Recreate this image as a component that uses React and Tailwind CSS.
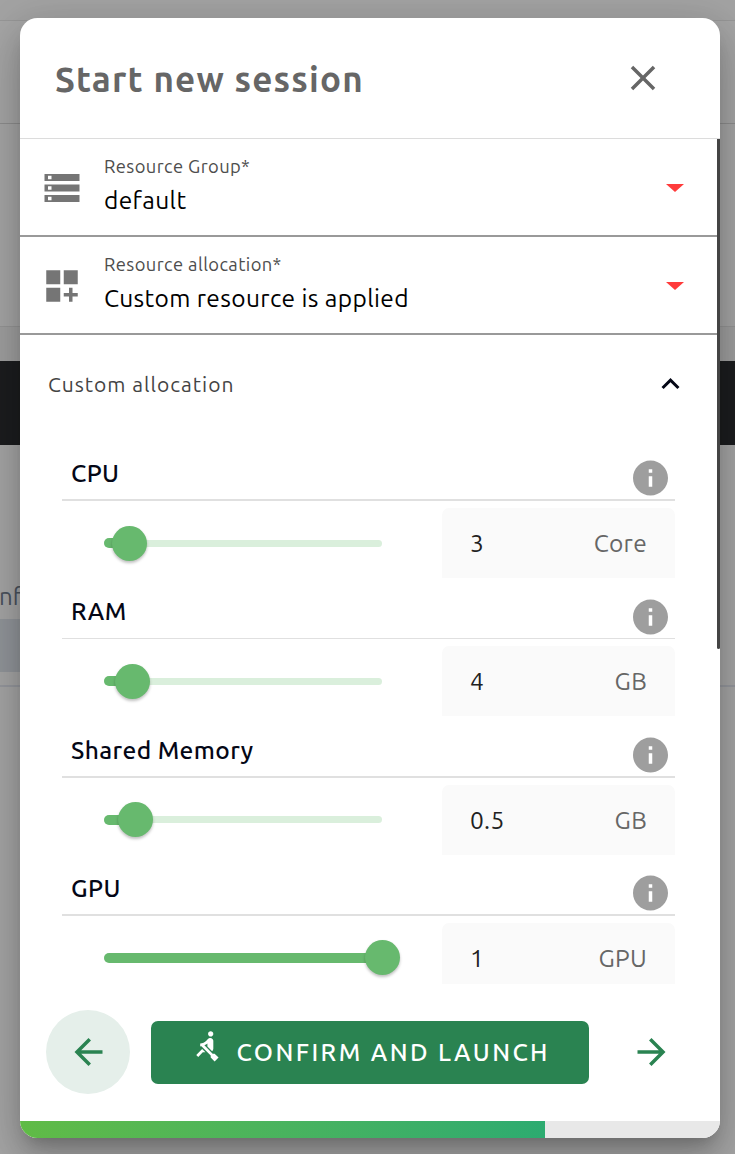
import {
  MdStorage,
  MdDashboardCustomize,
  MdClose,
  MdInfo,
  MdExpandLess,
  MdArrowBack,
  MdArrowForward,
  MdRowing,
} from "react-icons/md";

const THUMB_SIZE = 35;

const resources = [
  { name: "CPU", value: "3", unit: "Core", thumb: 25.5 },
  { name: "RAM", value: "4", unit: "GB", thumb: 28.5 },
  { name: "Shared Memory", value: "0.5", unit: "GB", thumb: 31 },
  { name: "GPU", value: "1", unit: "GPU", thumb: 278.5 },
];

function Backdrop() {
  return (
    <div className="col-start-1 row-start-1 flex h-[1154px] flex-col overflow-hidden bg-[#a6a6a6]">
      <div className="h-[21px] border-b border-[#979797] bg-[#a3a3a3]" />
      <div className="h-[103px] border-b border-[#8e8e8e]" />
      <div className="h-[203px] border-b border-[#969696]" />
      <div className="h-[34px] bg-[#a0a0a0]" />
      <div className="h-[84px] bg-[#1c1d1f]" />
      <div className="h-[174px] pt-[137px]">
        <div className="-ml-px text-[24px] leading-[30px] text-[#4b535e]">nf</div>
      </div>
      <div className="h-[53px] w-[60px] bg-[#92969b]" />
      <div className="h-[15px] border-b-2 border-[#96989e]" />
    </div>
  );
}

function SelectRow({ icon: Icon, label, value }) {
  return (
    <div className="flex h-[98px] shrink-0 items-center border-b-2 border-[#999999] pl-[21px] pr-[33px]">
      <Icon className="mt-[2px] size-[42px] shrink-0 text-[#757575]" />
      <div className="mb-[2px] ml-[21px] flex-1">
        <div className="h-[27px] text-[18.375px] leading-[27px] tracking-[0.4px] text-[#4d4d4d]">{label}</div>
        <div className="h-[40px] text-[24.5px] leading-[40px] tracking-[0.37px] text-black">{value}</div>
      </div>
      <svg className="mt-[2px] h-[8px] w-[18px]" viewBox="0 0 18 8">
        <path d="M0 0h18L9 8z" fill="#ff3b3b" />
      </svg>
    </div>
  );
}

function Slider({ thumb }) {
  return (
    <div className="relative ml-[42px] flex h-full w-[278px] items-center">
      <div className="h-[7px] w-full rounded-full bg-[#daefdc]" />
      <div className="absolute left-0 h-[10px] rounded-full bg-[#67b96e]" style={{ width: thumb }} />
      <div
        className="absolute size-[35px] rounded-full bg-[#67b96e] shadow-[0_2px_3px_rgba(0,0,0,0.25)]"
        style={{ left: thumb - THUMB_SIZE / 2 }}
      />
    </div>
  );
}

function ResourceBlock({ name, value, unit, thumb }) {
  return (
    <div className="h-[138.25px] shrink-0">
      <div className="flex h-[59.4px] items-end justify-between pl-[9px] pr-[3px]">
        <div className="h-[43.35px] text-[24.5px] font-medium leading-[34px] tracking-[0.4px] text-[#040716]">{name}</div>
        <MdInfo className="h-[42px] w-[43px] text-[#9e9e9e]" />
      </div>
      <div className="h-[1.75px] bg-[#e0e0e0]" />
      <div className="mt-[7.05px] flex h-[70px] justify-between">
        <Slider thumb={thumb} />
        <div className="flex w-[233px] items-center justify-between rounded-t-[7px] bg-[#fafafa] px-[28px] pt-[0.4px] text-[24.5px] tracking-[0.3px]">
          <span className="text-[#212121]">{value}</span>
          <span className="text-[#666666]">{unit}</span>
        </div>
      </div>
    </div>
  );
}

export default function App() {
  return (
    <div className="grid h-[1154px] w-[735px] overflow-hidden font-['Ubuntu','Noto_Sans',sans-serif]">
      <Backdrop />
      <div className="z-10 col-start-1 row-start-1 ml-[20px] mt-[18px] flex h-[1120px] w-[700px] flex-col overflow-hidden rounded-[17.5px] bg-white shadow-[0_24px_38px_3px_rgba(0,0,0,0.14),0_9px_46px_8px_rgba(0,0,0,0.12),0_11px_15px_-7px_rgba(0,0,0,0.2)]">
        <header className="flex h-[121px] shrink-0 items-center justify-between border-b border-[#dcdcdc] pl-[35px] pr-[56px]">
          <h1 className="mt-[2px] text-[35px] font-bold tracking-[1.2px] text-[#666666]">Start new session</h1>
          <MdClose className="size-[42px] text-[#666666]" />
        </header>

        <div className="flex h-[845px] shrink-0 overflow-hidden">
          <div className="flex w-[697px] flex-col">
            <SelectRow icon={MdStorage} label="Resource Group*" value="default" />
            <SelectRow icon={MdDashboardCustomize} label="Resource allocation*" value="Custom resource is applied" />
            <div className="flex h-[105px] shrink-0 items-start justify-between pl-[28px] pr-[28px] pt-[31px]">
              <div className="text-[21px] leading-[36px] tracking-[1px] text-[#444444]">Custom allocation</div>
              <MdExpandLess className="h-[36px] w-[37px] text-[#040716]" />
            </div>
            <div className="flex w-[655px] flex-col pl-[42px]">
              {resources.map((r) => (
                <ResourceBlock key={r.name} {...r} />
              ))}
            </div>
          </div>
          <div className="h-[510px] w-[3px] rounded-b-sm bg-[#444444]" />
        </div>

        <footer className="flex h-[137px] shrink-0 items-center pl-[26px]">
          <button className="mb-px flex size-[84px] items-center justify-center rounded-full bg-[#e5efea] text-[#2a8351]">
            <MdArrowBack className="ml-px h-[42px] w-[43px]" />
          </button>
          <button className="ml-[21px] flex h-[63px] w-[438px] items-center rounded-[7px] bg-[#2a8351] pl-[39.5px] text-white">
            <MdRowing className="mb-[13px] size-[31.5px]" />
            <span className="ml-[14.5px] whitespace-nowrap text-[24.5px] font-medium tracking-[2.43px]">CONFIRM AND LAUNCH</span>
          </button>
          <MdArrowForward className="mb-px ml-[41px] h-[42px] w-[43px] text-[#2a8351]" />
        </footer>
        <div className="flex h-[17px] shrink-0 bg-[#e8e8e8]">
          <div className="w-[525px] bg-linear-to-r from-[#60bb46] to-[#2cab70]" />
        </div>
      </div>
    </div>
  );
}
